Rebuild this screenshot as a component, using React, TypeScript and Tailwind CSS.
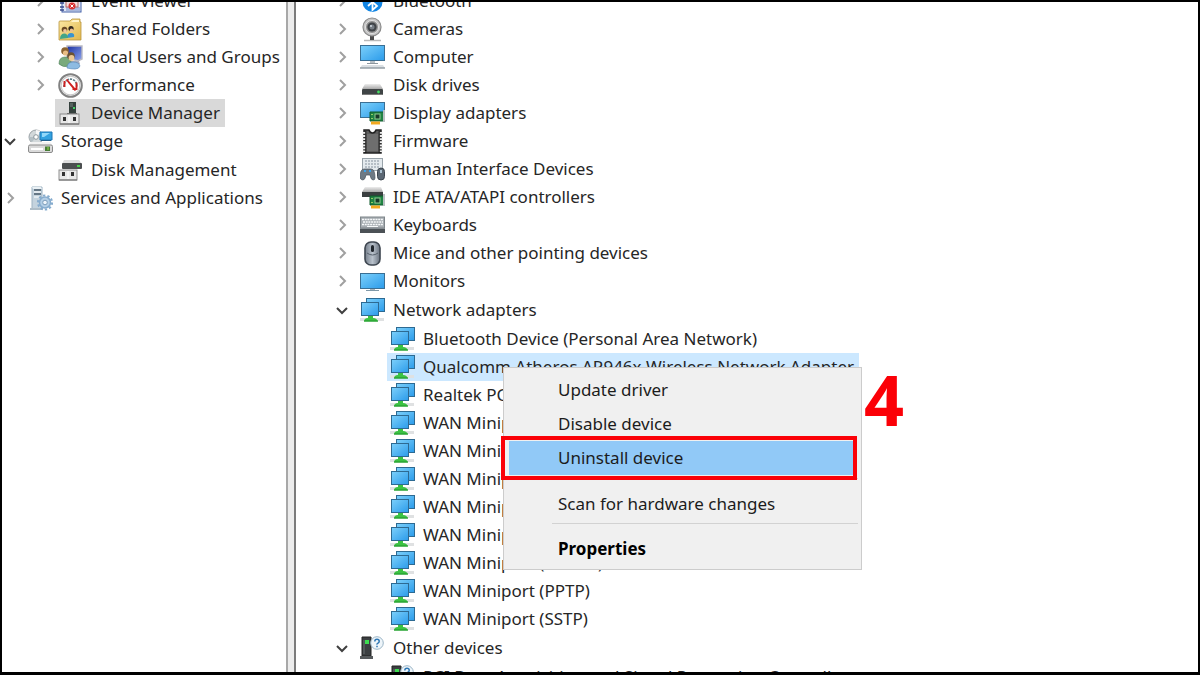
import { useState } from 'react';
import clsx from 'clsx';

// ── Icons ─────────────────────────────────────────────────────
function Svg({ children }: { children: React.ReactNode }) {
  return (
    <svg viewBox="0 0 25 25" className="w-[25px] h-[25px] shrink-0" aria-hidden="true">
      {children}
    </svg>
  );
}

function Gradients() {
  return (
    <svg className="absolute w-0 h-0" aria-hidden="true">
      <defs>
        <linearGradient id="screen" x1="0" y1="0" x2="1" y2="1">
          <stop offset="0" stopColor="#7cd0fb" />
          <stop offset="1" stopColor="#2b9bea" />
        </linearGradient>
        <linearGradient id="metal" x1="0" y1="0" x2="0" y2="1">
          <stop offset="0" stopColor="#ededed" />
          <stop offset="1" stopColor="#a9a9a9" />
        </linearGradient>
        <linearGradient id="folder" x1="0" y1="0" x2="1" y2="1">
          <stop offset="0" stopColor="#fbe9a6" />
          <stop offset="1" stopColor="#e3b84c" />
        </linearGradient>
        <linearGradient id="steel" x1="0" y1="0" x2="1" y2="0">
          <stop offset="0" stopColor="#77808c" />
          <stop offset="0.5" stopColor="#b9c2cc" />
          <stop offset="1" stopColor="#6b7480" />
        </linearGradient>
        <linearGradient id="navy" x1="0" y1="0" x2="1" y2="1">
          <stop offset="0" stopColor="#1a2fa0" />
          <stop offset="1" stopColor="#8fa6ee" />
        </linearGradient>
      </defs>
    </svg>
  );
}

const EventViewerIcon = () => (
  <Svg>
    <rect x="4" y="2" width="19" height="21" fill="#dfe6f5" stroke="#4360a8" />
    <path d="M8 6h14M8 19h14M8 21h14" stroke="#7288c4" />
    <rect x="8" y="10" width="12" height="8" fill="#f4dcdc" stroke="#b66" />
    <circle cx="14" cy="17" r="3.5" fill="#d93030" />
    <path d="M12.500 15.500l3 3m0-3l-3 3" stroke="#fff" />
    <path d="M2 6h4M2 10h4M2 14h4M2 18h4M2 21h4" stroke="#39488a" strokeWidth="1.500" />
  </Svg>
);

const SharedFoldersIcon = () => (
  <Svg>
    <path d="M1 5q0-1 1-1h10l2-2h8v3h1v18H1z" fill="url(#folder)" stroke="#b9943c" strokeWidth="0.800" />
    <path d="M13 5l2-2h6v2z" fill="#fff4c9" />
    <circle cx="6.500" cy="12.500" r="2.800" fill="#6b4a25" />
    <circle cx="13" cy="11.500" r="2.600" fill="#33291f" />
    <circle cx="7" cy="14" r="1.900" fill="#f0c79b" />
    <circle cx="13.500" cy="13.200" r="1.700" fill="#eebf90" />
    <path d="M9 21q0-5 4-5t3 4z" fill="#3a93cf" />
    <path d="M2 22q0-5 4-5.500 4 0 4 4.500z" fill="#43a587" />
  </Svg>
);

const LocalUsersIcon = () => (
  <Svg>
    <path d="M9 1h15v13l-4 2-11-3z" fill="url(#navy)" stroke="#b9b9c4" strokeWidth="1.400" />
    <path d="M11 16h10l1 3h-8z" fill="#a7adbf" />
    <circle cx="7" cy="6" r="3.800" fill="#8b6330" />
    <circle cx="7.500" cy="8" r="2.600" fill="#e8bd84" />
    <path d="M1 19q0-7 6-7 5 0 6 5l-2 4q-6 2-10-2z" fill="#79aa7c" stroke="#4d8059" strokeWidth="0.600" />
    <circle cx="13" cy="11" r="3.800" fill="#6d5230" />
    <circle cx="13.500" cy="13" r="2.900" fill="#ecc794" />
    <path d="M9 23q0-6 6-6 6 0 7 4-1 3-5 3t-8-1z" fill="#8dbbe2" stroke="#5383b5" strokeWidth="0.600" />
  </Svg>
);

const PerformanceIcon = () => (
  <Svg>
    <circle cx="12.500" cy="12.500" r="11.300" fill="#fff" stroke="#818181" strokeWidth="2" />
    <circle cx="12.500" cy="12.500" r="9.400" fill="none" stroke="#c9c9c9" strokeWidth="1.200" />
    <path d="M6 14q-.5-4 2.500-6.500M9 7q4-2 7.500.5 3 3 2 7" fill="none" stroke="#5d7b86" strokeWidth="1.600" strokeDasharray="2.200 0.900" />
    <path d="M6.500 8v6m2-7.500l9 10.500m-7-8l7 8.500m1-8v6.500h-4" fill="none" stroke="#cf2020" strokeWidth="1.900" />
  </Svg>
);

const DeviceManagerIcon = () => (
  <Svg>
    <path d="M11 1h7v11h-7z" fill="#34403c" />
    <path d="M12 2h3v4h-3z" fill="#55625e" />
    <rect x="15" y="6" width="2" height="2" fill="#42d266" />
    <path d="M9 12h10v2H9z" fill="#585858" />
    <rect x="2" y="13" width="19" height="10" fill="#e6e6e6" stroke="#8a8a8a" />
    <path d="M2 23h19" stroke="#686868" />
    <path d="M5 16h3v4H5zM15 16h3v4h-3z" fill="#333" />
    <path d="M11 14v8" stroke="#fff" />
  </Svg>
);

const StorageIcon = () => (
  <Svg>
    <circle cx="8" cy="8" r="7" fill="#d2d8da" stroke="#9aa1a5" />
    <path d="M8 1a7 7 0 0 1 5 2L8 8z" fill="#f6f6f6" />
    <path d="M1 8a7 7 0 0 0 3 5l4-5z" fill="#b4bfc4" />
    <circle cx="8" cy="8" r="2.300" fill="#fff" stroke="#8b979c" />
    <path d="M12 3h12v8H12z" fill="#34a2e0" stroke="#1c77b5" />
    <path d="M14 4h8l-6 4h-2z" fill="#92d8fa" />
    <path d="M13 11h10v1H13z" fill="#21628e" />
    <path d="M3 13h19l3 4H0z" fill="#f2f2f2" />
    <rect x="0.500" y="16" width="24" height="7.500" rx="1.500" fill="#dadada" stroke="#8b8b8b" />
    <path d="M3 20h12" stroke="#fff" strokeWidth="2" />
    <rect x="17" y="17.500" width="5" height="4.500" fill="#477d35" />
    <path d="M20 18v3" stroke="#9adb4f" />
  </Svg>
);

const DiskManagementIcon = () => (
  <Svg>
    <path d="M6 2h15l3 4H4z" fill="#dedede" />
    <rect x="4" y="5" width="20" height="6" rx="1" fill="#4c4f50" />
    <rect x="19" y="7" width="3" height="2" fill="#4bd34c" />
    <rect x="1" y="12" width="18" height="10" fill="#e8e8e8" stroke="#8f8f8f" />
    <path d="M1 22h18" stroke="#6c6c6c" />
    <path d="M4 14h3v4H4zM13 14h3v4h-3z" fill="#333" />
    <path d="M10 13v8" stroke="#fff" />
  </Svg>
);

const ServicesIcon = () => (
  <Svg>
    <path d="M4 1h10v22H4z" fill="#c4d3de" stroke="#9db2c1" />
    <path d="M4 1h9l1 2H5z" fill="#eaf1f5" />
    <path d="M6 4h7M6 8h7" stroke="#46596a" strokeWidth="1.500" />
    <path d="M6 6h7M6 11h7" stroke="#fff" />
    <path d="M2 22h13v2H2z" fill="#aebdc8" />
    <circle cx="17" cy="16.500" r="5.500" fill="#b4cfe6" stroke="#86acce" strokeWidth="1.500" />
    <circle cx="17" cy="16.500" r="7" fill="none" stroke="#86acce" strokeWidth="2.200" strokeDasharray="2.300 2.100" />
    <circle cx="17" cy="16.500" r="2.300" fill="#eef5fa" stroke="#7c9dbb" />
  </Svg>
);

const BluetoothIcon = () => (
  <Svg>
    <circle cx="12.500" cy="13" r="10" fill="#1285e4" />
    <path d="M8 9l9 8-4.500 4V5L17 9l-9 8" fill="none" stroke="#fff" strokeWidth="1.800" />
  </Svg>
);

const CameraIcon = () => (
  <Svg>
    <path d="M4 23.500h17" stroke="#b9b9b9" strokeWidth="1.500" />
    <path d="M10 18h4v5h-4z" fill="#4b4b4b" />
    <circle cx="12" cy="10" r="9" fill="#c6c6c6" stroke="#8a8a8a" strokeWidth="1.200" />
    <circle cx="12" cy="10" r="6.500" fill="#8d8d8d" stroke="#e3e3e3" />
    <circle cx="12" cy="10" r="4.600" fill="#3f4347" />
    <circle cx="12" cy="10" r="2.500" fill="#767d85" />
    <circle cx="11" cy="9" r="1" fill="#d5dce3" />
  </Svg>
);

const ComputerIcon = () => (
  <Svg>
    <rect x="0.500" y="0.500" width="24" height="15" fill="url(#screen)" stroke="#3a6f94" />
    <path d="M10 16h5v2h-5z" fill="#b7bfc5" />
    <path d="M7 18.500h11" stroke="#8b969e" />
    <path d="M2 20h21l2 3H0z" fill="#dadfe3" />
    <path d="M0 23h25" stroke="#8f9aa1" strokeWidth="1.400" />
  </Svg>
);

const DiskIcon = () => (
  <Svg>
    <path d="M5 11h15l3 5H2z" fill="url(#metal)" />
    <rect x="2" y="16" width="21" height="6" rx="1" fill="#3f4445" />
    <path d="M3 21.500h19" stroke="#7b7b7b" />
    <circle cx="18.500" cy="19" r="1.400" fill="#45db61" />
  </Svg>
);

const Board = () => (
  <>
    <path d="M10 11h14v9H10z" fill="#208343" stroke="#0f5b2c" />
    <path d="M23 9h2v12h-2z" fill="#b9c0c2" />
    <rect x="15" y="13" width="5" height="5" fill="#173a29" stroke="#8ecb91" />
    <path d="M12 13v1M12 17v1" stroke="#b7e36e" strokeWidth="1.500" />
    <path d="M11 20.500h9v3h-9z" fill="#f3aa20" />
  </>
);

const DisplayIcon = () => (
  <Svg>
    <rect x="0.500" y="1.500" width="24" height="15" fill="url(#screen)" stroke="#3a6f94" />
    <Board />
  </Svg>
);

const IdeIcon = () => (
  <Svg>
    <path d="M5 2h16l2 5H2z" fill="url(#metal)" />
    <path d="M2 7h21v5H2z" fill="#393e3f" />
    <Board />
  </Svg>
);

const FirmwareIcon = () => (
  <Svg>
    <path d="M4 1h5q1 3 3.500 3T16 1h5v23H4z" fill="#5c5c5c" stroke="#222" strokeWidth="1.500" />
    <path d="M7 5h11v17H7z" fill="#6e6e6e" />
    <path d="M4 3v20M21 3v20" stroke="#eee" strokeWidth="3" strokeDasharray="1.800 1.300" />
    <path d="M5.800 2v22M19.200 2v22" stroke="#111" strokeWidth="0.900" />
  </Svg>
);

const HidIcon = () => (
  <Svg>
    <rect x="2.500" y="1.500" width="20" height="12" fill="#e4eaee" stroke="#99a3aa" />
    <path d="M5 4h15M5 7h15M5 10h15" stroke="#a5b0b9" strokeWidth="1.500" strokeDasharray="2 1" />
    <path d="M0 21q0-9 4-9h7q4 0 4 9 0 2-2 2t-3-5H6q-1 5-3 5t-3-2z" fill="#6e7a85" stroke="#4b555e" strokeWidth="0.700" />
    <path d="M4 14h2M9 14h2" stroke="#3ca4ed" strokeWidth="1.800" />
    <rect x="17.500" y="11" width="7" height="12" rx="3.500" fill="#5c6874" stroke="#3c454e" />
    <path d="M21 13v3" stroke="#c8e3f5" strokeWidth="1.500" />
  </Svg>
);

const KeyboardIcon = () => (
  <Svg>
    <rect x="0.500" y="4" width="24" height="11" fill="#a7adb2" stroke="#7e858a" />
    <path d="M2 6.500h21M3 9h20M2 11.500h21" stroke="#f7f9fa" strokeWidth="1.500" strokeDasharray="2 0.700" />
    <path d="M7 13.500h11" stroke="#f7f9fa" />
    <path d="M0 15h25v5H0z" fill="#4b5156" />
    <path d="M0 15.500h25" stroke="#868d92" />
  </Svg>
);

const MouseIcon = () => (
  <Svg>
    <rect x="5" y="1" width="15" height="23" rx="6" fill="url(#steel)" stroke="#3e4650" strokeWidth="1.600" />
    <path d="M7 12q5.500 4 11 0" stroke="#56606b" fill="none" />
    <rect x="11" y="4" width="3" height="7" rx="1.500" fill="#20262d" />
  </Svg>
);

const MonitorIcon = () => (
  <Svg>
    <rect x="0.500" y="4.500" width="24" height="15" fill="url(#screen)" stroke="#3a6f94" />
    <path d="M10 20h5v1h-5z" fill="#a7b3bb" />
    <path d="M6 21.500h13" stroke="#7f98a8" />
  </Svg>
);

const NetworkIcon = () => (
  <Svg>
    <rect x="6.500" y="0.500" width="18" height="13" fill="url(#screen)" stroke="#2d6a92" />
    <rect x="1.500" y="4.500" width="17" height="13" fill="url(#screen)" stroke="#2d6a92" />
    <path d="M0 20h24v3H0z" fill="#dfe1e2" />
    <path d="M8 18h5v2q4 0 5 3.500H4q0-3.500 4-3.500z" fill="#3cc243" />
    <path d="M4 23h14" stroke="#20952c" />
  </Svg>
);

const UnknownIcon = () => (
  <Svg>
    <path d="M2 1h9v19H2z" fill="#3b3f41" stroke="#222" />
    <path d="M0 20h13v3H0z" fill="#565a5c" />
    <path d="M4 4v14" stroke="#6b7173" />
    <rect x="5" y="4" width="4" height="4" fill="#3ddd50" />
    <circle cx="17" cy="7" r="6.300" fill="#eef5fa" stroke="#9bb5c6" />
    <path d="M14.800 5.500q0-2.200 2.200-2.200t2.200 2q0 1.200-1.200 1.800t-1 1.600M17 9.800v1.400" fill="none" stroke="#2c76b4" strokeWidth="1.500" />
  </Svg>
);

const Chevron = ({ open }: { open?: boolean }) => (
  <svg viewBox="0 0 16 16" className="size-4" fill="none" aria-hidden="true">
    {open ? (
      <path d="M3 6l5 5 5-5" stroke="#404040" strokeWidth="2" />
    ) : (
      <path d="M6 3l5 5-5 5" stroke="#a0a0a0" strokeWidth="2" />
    )}
  </svg>
);

// ── Tree data ─────────────────────────────────────────────────
interface TreeNode {
  label: string;
  icon: () => React.ReactNode;
  expandable?: boolean;
  selected?: string;
  children?: TreeNode[];
}

const TOOLS: TreeNode[] = [
  { label: 'Event Viewer', icon: EventViewerIcon, expandable: true },
  { label: 'Shared Folders', icon: SharedFoldersIcon, expandable: true },
  { label: 'Local Users and Groups', icon: LocalUsersIcon, expandable: true },
  { label: 'Performance', icon: PerformanceIcon, expandable: true },
  { label: 'Device Manager', icon: DeviceManagerIcon, selected: 'bg-[#d9d9d9]' },
];

const CONSOLE: TreeNode[] = [
  {
    label: 'Storage',
    icon: StorageIcon,
    children: [{ label: 'Disk Management', icon: DiskManagementIcon }],
  },
  { label: 'Services and Applications', icon: ServicesIcon, expandable: true },
];

const DEVICES: TreeNode[] = [
  { label: 'Bluetooth', icon: BluetoothIcon, expandable: true },
  { label: 'Cameras', icon: CameraIcon, expandable: true },
  { label: 'Computer', icon: ComputerIcon, expandable: true },
  { label: 'Disk drives', icon: DiskIcon, expandable: true },
  { label: 'Display adapters', icon: DisplayIcon, expandable: true },
  { label: 'Firmware', icon: FirmwareIcon, expandable: true },
  { label: 'Human Interface Devices', icon: HidIcon, expandable: true },
  { label: 'IDE ATA/ATAPI controllers', icon: IdeIcon, expandable: true },
  { label: 'Keyboards', icon: KeyboardIcon, expandable: true },
  { label: 'Mice and other pointing devices', icon: MouseIcon, expandable: true },
  { label: 'Monitors', icon: MonitorIcon, expandable: true },
  {
    label: 'Network adapters',
    icon: NetworkIcon,
    children: [
      { label: 'Bluetooth Device (Personal Area Network)', icon: NetworkIcon },
      { label: 'Qualcomm Atheros AR946x Wireless Network Adapter', icon: NetworkIcon, selected: 'bg-[#cce8ff]' },
      { label: 'Realtek PCIe GbE Family Controller', icon: NetworkIcon },
      { label: 'WAN Miniport (IKEv2)', icon: NetworkIcon },
      { label: 'WAN Miniport (IP)', icon: NetworkIcon },
      { label: 'WAN Miniport (IPv6)', icon: NetworkIcon },
      { label: 'WAN Miniport (L2TP)', icon: NetworkIcon },
      { label: 'WAN Miniport (Network Monitor)', icon: NetworkIcon },
      { label: 'WAN Miniport (PPPOE)', icon: NetworkIcon },
      { label: 'WAN Miniport (PPTP)', icon: NetworkIcon },
      { label: 'WAN Miniport (SSTP)', icon: NetworkIcon },
    ],
  },
  {
    label: 'Other devices',
    icon: UnknownIcon,
    children: [{ label: 'PCI Data Acquisition and Signal Processing Controller', icon: UnknownIcon }],
  },
];

// ── Tree ──────────────────────────────────────────────────────
function TreeItem({ node }: { node: TreeNode }) {
  const [open, setOpen] = useState(true);
  const Icon = node.icon;

  return (
    <li className={clsx(node.children && 'mt-px first:mt-0')}>
      <div className="flex h-7 items-center gap-[7px]">
        {node.children || node.expandable ? (
          <button type="button" aria-label={`Toggle ${node.label}`} className="w-4 shrink-0" onClick={() => setOpen(!open)}>
            <Chevron open={!!node.children && open} />
          </button>
        ) : (
          <span className="w-4 shrink-0" />
        )}
        <span className={clsx('flex h-7 items-center gap-2 pl-[3px] pr-[5px] whitespace-nowrap', node.selected)}>
          <Icon />
          <span>{node.label}</span>
        </span>
      </div>
      {node.children && open && (
        <ul className="mt-px pl-[30px]">
          {node.children.map((child) => <TreeItem key={child.label} node={child} />)}
        </ul>
      )}
    </li>
  );
}

// ── Context menu ──────────────────────────────────────────────
function MenuItem({ label, className }: { label: string; className?: string }) {
  return (
    <button type="button" role="menuitem" className={clsx('block h-[34px] w-full pl-[49px] text-left whitespace-nowrap', className)}>
      {label}
    </button>
  );
}

function ContextMenu() {
  return (
    <div role="menu" className="absolute top-[365px] left-[501px] w-[359px] border border-[#cccccc] bg-[#f0f0f0] px-[5px] pt-[5px] pb-[3px] text-[#1c1c1c]">
      <MenuItem label="Update driver" />
      <MenuItem label="Disable device" />
      <div className="relative">
        <MenuItem label="Uninstall device" className="bg-[#91c9f7]" />
        <span className="absolute -inset-y-[5px] -left-2 -right-px border-4 border-[#fb0007]" />
      </div>
      <hr className="mt-[3px] mb-2 ml-[43px] -mr-[2px] border-[#d2d2d2]" />
      <MenuItem label="Scan for hardware changes" />
      <hr className="mt-[2px] mb-2 ml-[43px] -mr-[2px] border-[#d2d2d2]" />
      <MenuItem label="Properties" className="font-bold text-black" />
    </div>
  );
}

export default function App() {
  return (
    <div className="relative flex h-screen overflow-hidden border-2 border-b-3 border-black bg-white font-['Noto_Sans',sans-serif] text-[17px] leading-7 text-[#262626]">
      <Gradients />
      <nav className="w-[284px] shrink-0 overflow-hidden">
        <ul className="-mt-[15px] pl-[30px]">
          {TOOLS.map((node) => <TreeItem key={node.label} node={node} />)}
        </ul>
        <ul>
          {CONSOLE.map((node) => <TreeItem key={node.label} node={node} />)}
        </ul>
      </nav>
      <div className="w-[10px] shrink-0 border-x-2 border-l-[#a8a8a8] border-r-[#7b7b7b] bg-[#ececec]" />
      <main className="min-w-0 flex-1 overflow-hidden">
        <ul className="-mt-[15px] pl-[38px]">
          {DEVICES.map((node) => <TreeItem key={node.label} node={node} />)}
        </ul>
      </main>
      <ContextMenu />
      <strong className="absolute top-[362px] left-[862px] font-['Open_Sans',sans-serif] text-[70px] leading-[70px] font-bold text-[#fb0007]">4</strong>
    </div>
  );
}
